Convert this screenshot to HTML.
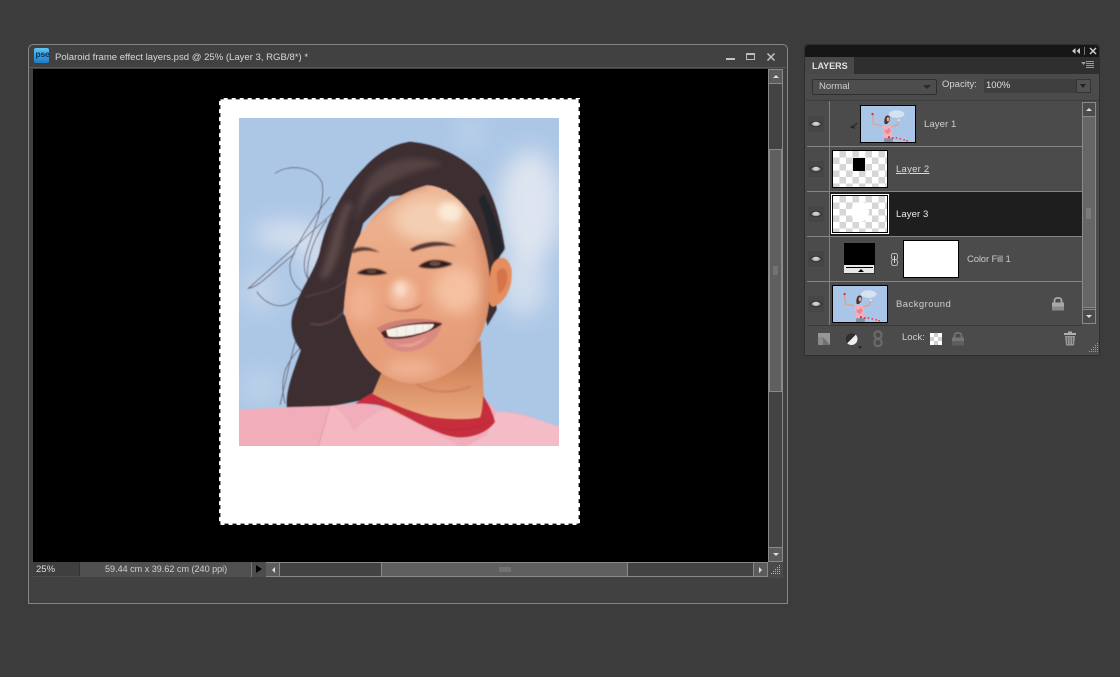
<!DOCTYPE html>
<html><head><meta charset="utf-8">
<style>
html,body{margin:0;padding:0;background:#3c3c3c;width:1120px;height:677px;overflow:hidden}
*{box-sizing:border-box}
body{font-family:"Liberation Sans",sans-serif;font-size:9.5px;color:#d8d8d8;position:relative}
.a{position:absolute}
.t{position:absolute;white-space:nowrap;line-height:12px}
.chk{background-color:#fff;background-image:conic-gradient(#d6d6d6 25%,#fff 0 50%,#d6d6d6 0 75%,#fff 0);background-size:13px 13px}
.th{position:absolute;border:1px solid #000;overflow:hidden}
.div{position:absolute;height:1px;background:#858585}
.eye{position:absolute;left:808px;width:16px;height:16px;background:#464646}
</style></head><body>
<svg width="0" height="0" style="position:absolute"><defs>
<filter id="mb" x="-10%" y="-10%" width="120%" height="120%"><feGaussianBlur stdDeviation=".35"/></filter>
<symbol id="mini" viewBox="0 0 56 38" preserveAspectRatio="none">
<g filter="url(#mb)">
<rect width="56" height="38" fill="#a9c6e8"/>
<ellipse cx="37" cy="8.500" rx="8" ry="4" fill="#d6e2f0"/>
<path d="M12 9L13 19L22 21" fill="none" stroke="#e2a08c" stroke-width="1.400"/>
<path d="M31 22L38 20L39 15" fill="none" stroke="#e2a08c" stroke-width="1.400"/>
<circle cx="12" cy="8.500" r="1.300" fill="#d8383c"/><circle cx="39" cy="15" r="1.100" fill="#f0e4e4"/>
<path d="M24.500 19C23.500 14 25 10 27.500 10C30 10 30.500 12.500 29.500 16L27 19Z" fill="#4a3236"/>
<ellipse cx="28" cy="14" rx="1.400" ry="2.200" fill="#e4a88e"/>
<path d="M22 20L31 20L33 33L24 35Z" fill="#f2b0ba"/>
<path d="M24 24l2 2 3-3 2 3-3 4-3-2z" fill="#e8687a" opacity=".6"/>
<rect x="24" y="34" width="9" height="4" fill="#7f8ea0"/>
<g fill="#e8283c"><rect x="28" y="32" width="2" height="2"/><rect x="32" y="33" width="2" height="1.500"/><rect x="36" y="33" width="1.500" height="1.500"/><rect x="40" y="34" width="1.500" height="1.500"/><rect x="44" y="35" width="1.500" height="1.500"/><rect x="47" y="36" width="1.500" height="1.500"/></g>
</g>
</symbol>
<symbol id="eyeI" viewBox="0 0 16 16">
<path d="M1.500 8C4 3.800 12 3.800 14.500 8C12 12.200 4 12.200 1.500 8Z" fill="#2e2e2e"/>
<path d="M3 8C5 5 11 5 13 8C11 11 5 11 3 8Z" fill="#8e8e8e"/>
<ellipse cx="8" cy="7.600" rx="3" ry="1.900" fill="#cfcfcf"/>
</symbol>
<filter id="b1" x="-100%" y="-100%" width="300%" height="300%"><feGaussianBlur stdDeviation="34"/></filter>
<filter id="b2" x="-100%" y="-100%" width="300%" height="300%"><feGaussianBlur stdDeviation="9"/></filter>
<filter id="b3" x="-100%" y="-100%" width="300%" height="300%"><feGaussianBlur stdDeviation="2.500"/></filter>
<filter id="b4" x="-100%" y="-100%" width="300%" height="300%"><feGaussianBlur stdDeviation="20"/></filter>
<filter id="soft" x="-5%" y="-5%" width="110%" height="110%"><feGaussianBlur stdDeviation="1.400"/></filter>
<clipPath id="pc"><rect x="28" y="25" width="958" height="983"/></clipPath>
<clipPath id="fc"><path d="M366 430C395 335 480 255 590 226C660 228 722 295 748 365C770 425 785 490 778 570C772 635 755 685 722 730C680 790 600 825 535 820C470 812 420 770 388 715C360 665 340 625 343 575C348 525 355 475 366 430Z"/></clipPath>
<linearGradient id="skin" x1="0" y1="0" x2="0" y2="1"><stop offset="0" stop-color="#eeb896"/><stop offset=".5" stop-color="#eaa480"/><stop offset="1" stop-color="#e49a76"/></linearGradient>
<linearGradient id="neckG" x1="0" y1="0" x2="0" y2="1"><stop offset="0" stop-color="#bb6f4a"/><stop offset=".45" stop-color="#d98d62"/><stop offset="1" stop-color="#eeb08a"/></linearGradient>
</defs></svg>

<!-- document window -->
<div class="a" style="left:28px;top:44px;width:760px;height:560px;background:#414141;border:1px solid #858585;border-radius:5px 5px 0 0"></div>
<div class="a" style="left:29px;top:67px;width:757px;height:1px;background:#585858"></div>
<div class="a" style="left:34px;top:48px;width:15px;height:15px;border-radius:2px;background:linear-gradient(#5fc4f4,#1c7cc8)"></div>
<div class="t" style="left:35.500px;top:48px;font-size:8.500px;font-weight:bold;color:#0b2f52;letter-spacing:-.2px">pse</div>
<div class="t" style="left:55px;top:52px;font-size:9.550px;color:#d8d8d8">Polaroid frame effect layers.psd @ 25% (Layer 3, RGB/8*) *</div>
<div class="a" style="left:726px;top:58px;width:9px;height:2px;background:#c4c4c4"></div>
<div class="a" style="left:746px;top:53px;width:9px;height:7px;border:1px solid #bdbdbd;border-top-width:2px"></div>
<svg class="a" style="left:766px;top:52px" width="10" height="10"><path d="M1.500 1.500L8.500 8.500M8.500 1.500L1.500 8.500" stroke="#c4c4c4" stroke-width="1.500"/></svg>

<!-- canvas -->
<div class="a" style="left:33px;top:69px;width:735px;height:493px;background:#000"></div>
<div class="a" style="left:219px;top:98px;width:361px;height:427px;background:#fff"></div>
<svg class="a" style="left:219px;top:98px" width="361" height="427"><rect x=".7" y=".7" width="359.600" height="425.600" fill="none" stroke="#000" stroke-width="1.400" stroke-dasharray="4 4"/></svg>

<!-- photo -->
<svg class="a" style="left:230px;top:110px" width="340" height="340" viewBox="0 0 1020 1020">
<g clip-path="url(#pc)">
<g filter="url(#soft)">
<rect x="20" y="15" width="980" height="1000" fill="#acc7e6"/>
<g filter="url(#b1)" fill="#e3e8f1">
<ellipse cx="900" cy="290" rx="95" ry="170" opacity=".9"/>
<ellipse cx="880" cy="520" rx="70" ry="100" opacity=".7"/>
<ellipse cx="170" cy="375" rx="100" ry="40" opacity=".85"/>
<ellipse cx="90" cy="540" rx="60" ry="70" opacity=".4"/>
<ellipse cx="720" cy="70" rx="30" ry="40" opacity=".45"/>
<ellipse cx="90" cy="830" rx="60" ry="40" opacity=".4"/>
<ellipse cx="260" cy="440" rx="50" ry="90" opacity=".6"/>
</g>
<!-- stray hair -->
<g fill="none" stroke="#43363e" stroke-width="2.400" opacity=".75">
<path d="M330 290C260 350 130 470 55 535C90 530 130 480 195 430"/>
<path d="M135 190C180 160 250 170 275 215C290 270 250 360 225 440C215 500 240 530 280 520"/>
<path d="M80 545C100 575 140 600 180 580C200 565 215 555 240 550"/>
<path d="M300 260C250 320 200 400 180 460C175 520 215 560 270 560"/>
<path d="M225 700C170 750 145 800 165 880"/>
<path d="M290 330C240 400 220 480 240 540"/>
<path d="M215 640C190 700 175 780 150 885"/>
</g>
<!-- hair -->
<path d="M540 95C620 100 700 140 745 190C790 245 810 320 825 415L800 455L800 600L772 648L740 500L650 240L480 260L400 340L350 520L340 610L460 790L440 840L400 870L300 890L170 892C165 840 195 770 212 720C188 690 172 640 195 590C215 530 250 490 268 430C285 340 335 240 400 175C440 130 490 100 540 95Z" fill="#3e2e32"/>
<path d="M430 190C480 145 560 130 640 165C600 170 500 195 430 250C410 270 390 300 375 340C385 270 405 215 430 190Z" fill="#5c4946" opacity=".8" filter="url(#b2)"/>
<path d="M345 280C315 340 295 430 270 500C285 530 320 470 335 400C340 350 355 310 372 280Z" fill="#67534f" opacity=".75" filter="url(#b2)"/>
<path d="M240 640C270 650 310 640 340 605" fill="none" stroke="#7a5c58" stroke-width="5" opacity=".6" filter="url(#b3)"/>
<path d="M225 560C270 550 330 540 355 500" fill="none" stroke="#6a5250" stroke-width="4" opacity=".6" filter="url(#b3)"/>
<path d="M760 250C795 310 810 370 822 420L795 450C780 390 770 320 745 270Z" fill="#22262a" filter="url(#b3)"/>
<!-- neck -->
<path d="M462 770L420 870L560 950L770 950L762 860L752 690L640 790Z" fill="url(#neckG)"/>
<path d="M560 822C600 850 660 852 722 830" fill="none" stroke="#a85c3c" stroke-width="3" opacity=".6" filter="url(#b3)"/>
<!-- ear -->
<path d="M785 470C800 435 835 430 845 480C850 530 825 580 790 590C772 590 770 540 785 470Z" fill="#e58f60"/>
<path d="M800 490C812 465 830 470 832 500C832 530 815 550 805 550Z" fill="#cf6840" opacity=".7" filter="url(#b3)"/>
<!-- face -->
<path d="M366 430C395 335 480 255 590 226C660 228 722 295 748 365C770 425 785 490 778 570C772 635 755 685 722 730C680 790 600 825 535 820C470 812 420 770 388 715C360 665 340 625 343 575C348 525 355 475 366 430Z" fill="url(#skin)"/>
<g clip-path="url(#fc)">
<ellipse cx="600" cy="330" rx="110" ry="65" fill="#f6d4ba" opacity=".85" filter="url(#b4)"/>
<ellipse cx="660" cy="305" rx="36" ry="30" fill="#fdeedd" opacity=".85" filter="url(#b2)"/>
<ellipse cx="680" cy="540" rx="70" ry="70" fill="#f6c4a4" opacity=".9" filter="url(#b4)"/>
<ellipse cx="395" cy="580" rx="40" ry="60" fill="#f2b292" filter="url(#b4)"/>
<ellipse cx="540" cy="775" rx="80" ry="28" fill="#f0b494" filter="url(#b4)"/>
<path d="M715 340C770 420 790 580 730 740L810 720L810 340Z" fill="#c87650" opacity=".65" filter="url(#b4)"/>
<path d="M420 330C480 270 540 240 600 232L560 210L400 300Z" fill="#b97c62" opacity=".55" filter="url(#b2)"/>
</g>
<!-- nose -->
<ellipse cx="518" cy="550" rx="44" ry="46" fill="#f1b89c" filter="url(#b2)"/>
<ellipse cx="512" cy="538" rx="20" ry="24" fill="#fbdac4" filter="url(#b2)"/>
<path d="M465 582C485 605 540 608 578 580C570 600 530 610 505 604C485 600 470 592 465 582Z" fill="#b8684e" opacity=".8" filter="url(#b3)"/>
<!-- brows & eyes -->
<path d="M368 418C395 405 425 412 450 428C425 420 395 418 368 430Z" fill="#5a3a30" filter="url(#b3)"/>
<path d="M540 418C580 392 635 388 680 410C640 402 590 408 548 425Z" fill="#553630" filter="url(#b3)"/>
<path d="M380 490C405 470 445 472 472 490C440 497 410 498 380 490Z" fill="#2e1c1a" filter="url(#b3)"/>
<path d="M565 470C590 445 630 445 668 462C640 475 600 480 565 470Z" fill="#2e1c1a" filter="url(#b3)"/>
<ellipse cx="615" cy="461" rx="17" ry="7" fill="#6a4c42"/>
<ellipse cx="425" cy="484" rx="15" ry="6" fill="#5c4238"/>
<!-- mouth -->
<path d="M445 657C480 635 590 628 636 640C615 690 510 715 462 682Z" fill="#4a211e"/>
<path d="M440 655C490 622 590 618 640 638C590 632 490 642 452 668Z" fill="#cf7f74"/>
<path d="M468 660C510 646 570 640 612 642C610 660 580 668 540 676C510 682 480 682 474 678Z" fill="#f5f0e8"/>
<g stroke="#c8b8aa" stroke-width="1.500" opacity=".6"><path d="M500 652V680M528 648V676M555 644V672M578 642V666M597 640V660"/></g>
<path d="M456 680C490 696 580 682 636 642C625 690 580 725 525 725C490 725 465 705 456 680Z" fill="#d98a82"/>
<path d="M490 700C520 710 560 700 590 680C570 710 520 720 490 700Z" fill="#eeaca2" opacity=".8" filter="url(#b3)"/>
<!-- shirt -->
<path d="M20 900C130 893 230 890 300 888C330 885 360 882 400 880L470 895L600 955L680 985L760 965L775 875C790 895 800 905 800 905C850 905 880 910 910 924L1000 955V1015H20Z" fill="#f1adba"/>
<path d="M300 888C330 895 350 920 372 965C400 930 440 905 470 895C520 920 570 950 640 980L700 1015H265C280 960 290 920 300 888Z" fill="#f5b7c2"/>
<path d="M300 888C288 930 275 970 265 1010" stroke="#dd8898" stroke-width="1.500" fill="none"/>
<path d="M800 905C850 905 900 920 1000 955V1015H700L770 975Z" fill="#f3bcc7"/>
<!-- collar -->
<path d="M375 881C395 868 410 856 426 850C470 875 540 905 600 920C650 928 720 930 750 922C757 905 757 880 760 858C775 880 790 912 795 936C775 965 730 985 680 982C620 975 540 925 480 895C445 883 410 880 375 881Z" fill="#c62e3e"/>
<path d="M600 945C650 965 720 965 780 935" fill="none" stroke="#a82030" stroke-width="3" opacity=".4"/>
</g>
</g>
</svg>

<!-- v scrollbar -->
<div class="a" style="left:768px;top:69px;width:15px;height:493px;background:#434343;border:1px solid #8a8a8a"></div>
<div class="a" style="left:769px;top:70px;width:13px;height:14px;background:#5c5c5c;border-bottom:1px solid #8a8a8a"></div>
<div class="a" style="left:773px;top:75px;width:0;height:0;border:3px solid transparent;border-bottom:3px solid #ddd;border-top:0"></div>
<div class="a" style="left:769px;top:149px;width:13px;height:243px;background:#5f5f5f;border:1px solid #8a8a8a"></div>
<div class="a" style="left:773px;top:266px;width:5px;height:9px;background-image:radial-gradient(#aaa 40%,transparent 45%);background-size:2px 2px"></div>
<div class="a" style="left:769px;top:547px;width:13px;height:14px;background:#5c5c5c;border-top:1px solid #8a8a8a"></div>
<div class="a" style="left:773px;top:553px;width:0;height:0;border:3px solid transparent;border-top:3px solid #ddd;border-bottom:0"></div>

<!-- status bar -->
<div class="a" style="left:33px;top:562px;width:47px;height:15px;background:#3f3f3f;border-right:1px solid #333;border-bottom:1px solid #4c4c4c"></div>
<div class="t" style="left:36px;top:564px;font-size:9.500px;color:#dcdcdc">25%</div>
<div class="a" style="left:80px;top:562px;width:172px;height:15px;background:#505050"></div>
<div class="t" style="left:105px;top:563px;font-size:9.050px;color:#d0d0d0">59.44 cm x 39.62 cm (240 ppi)</div>
<div class="a" style="left:251px;top:562px;width:15px;height:15px;background:#4c4c4c;border-left:1px solid #777"></div>
<div class="a" style="left:256px;top:565px;width:0;height:0;border:4.500px solid transparent;border-left:6px solid #000;border-right:0"></div>
<!-- h scrollbar -->
<div class="a" style="left:266px;top:562px;width:502px;height:15px;background:#434343;border:1px solid #8a8a8a"></div>
<div class="a" style="left:266px;top:563px;width:14px;height:13px;background:#5c5c5c;border-right:1px solid #8a8a8a"></div>
<div class="a" style="left:272px;top:567px;width:0;height:0;border:3px solid transparent;border-right:3px solid #ddd;border-left:0"></div>
<div class="a" style="left:381px;top:562px;width:247px;height:15px;background:#5f5f5f;border:1px solid #8a8a8a"></div>
<div class="a" style="left:499px;top:567px;width:12px;height:5px;background-image:radial-gradient(#aaa 40%,transparent 45%);background-size:2px 2px"></div>
<div class="a" style="left:753px;top:563px;width:14px;height:13px;background:#5c5c5c;border-left:1px solid #8a8a8a"></div>
<div class="a" style="left:759px;top:567px;width:0;height:0;border:3px solid transparent;border-left:3px solid #ddd;border-right:0"></div>
<div class="a" style="left:768px;top:562px;width:15px;height:16px;background:#4a4a4a"></div>
<svg class="a" style="left:770px;top:564px" width="12" height="12"><g fill="#b8b8b8"><rect x="9" y="1" width="1" height="1"/><rect x="7" y="3" width="1" height="1"/><rect x="9" y="3" width="1" height="1"/><rect x="5" y="5" width="1" height="1"/><rect x="7" y="5" width="1" height="1"/><rect x="9" y="5" width="1" height="1"/><rect x="3" y="7" width="1" height="1"/><rect x="5" y="7" width="1" height="1"/><rect x="7" y="7" width="1" height="1"/><rect x="9" y="7" width="1" height="1"/><rect x="1" y="9" width="1" height="1"/><rect x="3" y="9" width="1" height="1"/><rect x="5" y="9" width="1" height="1"/><rect x="7" y="9" width="1" height="1"/><rect x="9" y="9" width="1" height="1"/></g></svg>

<!-- layers panel -->
<div class="a" style="left:804px;top:44px;width:296px;height:312px;background:#4b4b4b;border:1px solid #2e2e2e;border-radius:3px 3px 0 0"></div>
<div class="a" style="left:805px;top:45px;width:294px;height:12px;background:#161616;border-radius:3px 3px 0 0"></div>
<div class="a" style="left:805px;top:57px;width:294px;height:17px;background:#2f2f2f"></div>
<div class="a" style="left:805px;top:57px;width:49px;height:17px;background:#484848"></div>
<div class="t" style="left:812px;top:60px;font-size:9px;font-weight:bold;color:#e0e0e0">LAYERS</div>
<svg class="a" style="left:1072px;top:46px" width="26" height="10"><path d="M3.500 2L0 5L3.500 8ZM8 2L4.500 5L8 8Z" fill="#ccc"/><rect x="12" y="1" width="1" height="8" fill="#777"/><path d="M18 2L24 8M24 2L18 8" stroke="#ccc" stroke-width="1.500"/></svg>
<svg class="a" style="left:1080px;top:60px" width="16" height="10"><path d="M1 2H6L3.500 5Z" fill="#999"/><g fill="#999"><rect x="6" y="1" width="8" height="1"/><rect x="6" y="3" width="8" height="1"/><rect x="6" y="5" width="8" height="1"/><rect x="6" y="7" width="8" height="1"/></g></svg>

<!-- blend controls -->
<div class="a" style="left:812px;top:79px;width:125px;height:16px;background:#4d4d4d;border:1px solid #2f2f2f;border-radius:2px"></div>
<div class="t" style="left:819px;top:81px;font-size:9.500px;color:#cfcfcf">Normal</div>
<div class="a" style="left:923px;top:85px;width:0;height:0;border:4px solid transparent;border-top:4px solid #2a2a2a;border-bottom:0"></div>
<div class="t" style="left:942px;top:79px;font-size:9.500px;color:#d4d4d4">Opacity:</div>
<div class="a" style="left:984px;top:79px;width:107px;height:14px;background:#3f3f3f"></div>
<div class="t" style="left:986px;top:80px;font-size:9.500px;color:#e0e0e0">100%</div>
<div class="a" style="left:1076px;top:79px;width:15px;height:14px;background:#525252;border:1px solid #333"></div>
<div class="a" style="left:1080px;top:84px;width:0;height:0;border:3.500px solid transparent;border-top:4px solid #222;border-bottom:0"></div>
<div class="div" style="left:806px;top:100px;width:293px;background:#3c3c3c"></div>

<!-- rows -->
<div class="a" style="left:829px;top:101px;width:1px;height:224px;background:#808080"></div>
<div class="a" style="left:830px;top:192px;width:252px;height:45px;background:#1e1e1e"></div>
<div class="div" style="left:807px;top:146px;width:275px"></div>
<div class="div" style="left:807px;top:191px;width:275px"></div>
<div class="div" style="left:807px;top:236px;width:275px"></div>
<div class="div" style="left:807px;top:281px;width:275px"></div>
<div class="a" style="left:807px;top:325px;width:275px;height:1px;background:#393939"></div>

<div class="eye" style="top:116px"></div><svg class="a" style="left:808px;top:116px" width="16" height="16"><use href="#eyeI"/></svg>
<div class="eye" style="top:161px"></div><svg class="a" style="left:808px;top:161px" width="16" height="16"><use href="#eyeI"/></svg>
<div class="eye" style="top:206px"></div><svg class="a" style="left:808px;top:206px" width="16" height="16"><use href="#eyeI"/></svg>
<div class="eye" style="top:251px"></div><svg class="a" style="left:808px;top:251px" width="16" height="16"><use href="#eyeI"/></svg>
<div class="eye" style="top:296px"></div><svg class="a" style="left:808px;top:296px" width="16" height="16"><use href="#eyeI"/></svg>

<!-- Layer 1 -->
<svg class="a" style="left:850px;top:120px" width="9" height="10"><path d="M1 7L3 6L4 8ZM4 6L7 3" stroke="#242424" stroke-width="1.200" fill="#181818"/></svg>
<div class="th" style="left:860px;top:105px;width:56px;height:38px"><svg width="54" height="36" style="display:block"><use href="#mini" width="54" height="36"/></svg></div>
<div class="t" style="left:924px;top:119px;color:#cfcfcf;letter-spacing:.1px">Layer 1</div>
<!-- Layer 2 -->
<div class="th chk" style="left:832px;top:150px;width:56px;height:38px"><div class="a" style="left:20px;top:7px;width:12px;height:13px;background:#000"></div></div>
<div class="t" style="left:896px;top:164px;color:#d8d8d8;letter-spacing:.25px;text-decoration:underline">Layer 2</div>
<!-- Layer 3 -->
<div class="a" style="left:831px;top:194px;width:58px;height:40px;background:#000;border:1px solid #fff"></div>
<div class="a chk" style="left:833px;top:196px;width:54px;height:36px"><div class="a" style="left:18px;top:6px;width:18px;height:20px;border-radius:50%;background:#fff"></div></div>
<div class="t" style="left:896px;top:209px;color:#ececec;letter-spacing:.1px">Layer 3</div>
<!-- Color Fill -->
<div class="a" style="left:844px;top:243px;width:31px;height:31px;background:#e8e8e8;border-right:1px solid #333;border-bottom:1px solid #333"></div>
<div class="a" style="left:844px;top:243px;width:31px;height:22px;background:#000"></div>
<div class="a" style="left:846px;top:267px;width:27px;height:1px;background:#000"></div>
<div class="a" style="left:858px;top:269px;width:0;height:0;border:3px solid transparent;border-bottom:3px solid #000;border-top:0"></div>
<svg class="a" style="left:890px;top:252px" width="9" height="15"><path d="M2.500 1.500H6.500L7.500 3V6L6.500 7.500H2.500L1.500 6V3ZM2.500 7.500H6.500L7.500 9V12L6.500 13.500H2.500L1.500 12V9Z" fill="none" stroke="#b4b4b4" stroke-width="1"/><rect x="4" y="4" width="1" height="7" fill="#d8d8d8"/></svg>
<div class="a" style="left:903px;top:240px;width:56px;height:38px;background:#fff;border:1px solid #000"></div>
<div class="t" style="left:967px;top:254px;color:#c8c8c8;letter-spacing:-.15px">Color Fill 1</div>
<!-- Background -->
<div class="th" style="left:832px;top:285px;width:56px;height:38px"><svg width="54" height="36" style="display:block"><use href="#mini" width="54" height="36"/></svg></div>
<div class="t" style="left:896px;top:299px;color:#cfcfcf;letter-spacing:.45px">Background</div>
<svg class="a" style="left:1051px;top:296px" width="14" height="15"><path d="M3.500 7V4.500C3.500 1 10.500 1 10.500 4.500V7" fill="none" stroke="#aaa" stroke-width="1.800"/><rect x="1" y="6.500" width="12" height="8" fill="#a8a8a8"/><rect x="1" y="10.500" width="12" height="4" fill="#8a8a8a"/></svg>

<!-- panel scrollbar -->
<div class="a" style="left:1082px;top:102px;width:14px;height:222px;background:#666;border:1px solid #8a8a8a"></div>
<div class="a" style="left:1083px;top:103px;width:12px;height:14px;background:#4c4c4c;border-bottom:1px solid #8a8a8a"></div>
<div class="a" style="left:1086px;top:108px;width:0;height:0;border:3px solid transparent;border-bottom:3px solid #ddd;border-top:0"></div>
<div class="a" style="left:1083px;top:307px;width:12px;height:2px;background:#4c4c4c;border-top:1px solid #8a8a8a"></div>
<div class="a" style="left:1083px;top:309px;width:12px;height:14px;background:#4c4c4c;border-top:1px solid #8a8a8a"></div>
<div class="a" style="left:1086px;top:315px;width:0;height:0;border:3px solid transparent;border-top:3px solid #ddd;border-bottom:0"></div>
<div class="a" style="left:1086px;top:208px;width:5px;height:11px;background-image:radial-gradient(#b4b4b4 40%,transparent 45%);background-size:2px 2px"></div>

<!-- panel footer -->
<svg class="a" style="left:818px;top:333px" width="13" height="13"><rect width="12" height="12" fill="#8a8a8a"/><path d="M0 0H12V12L5 4H0Z" fill="#969696"/><path d="M5 4L12 12H5Z" fill="#707070"/></svg>
<svg class="a" style="left:844px;top:331px" width="20" height="18"><circle cx="7.500" cy="8" r="6" fill="#f0f0f0"/><path d="M3.300 12.300A6 6 0 0 1 11.700 3.700Z" fill="#2f2f2f"/><path d="M14 15.500H18L16 17.500Z" fill="#111"/></svg>
<svg class="a" style="left:872px;top:330px" width="12" height="18"><rect x="2.500" y="1.500" width="7" height="7" rx="3" fill="none" stroke="#6a6a6a" stroke-width="2.200"/><rect x="2.500" y="9" width="7" height="7" rx="3" fill="none" stroke="#6a6a6a" stroke-width="2.200"/></svg>
<div class="t" style="left:902px;top:332px;font-size:9.500px;color:#c8d0d8">Lock:</div>
<div class="a" style="left:930px;top:333px;width:12px;height:12px;background-color:#fff;background-image:conic-gradient(#d0d0d0 25%,#fff 0 50%,#d0d0d0 0 75%,#fff 0);background-size:8px 8px"></div>
<svg class="a" style="left:951px;top:331px" width="14" height="15"><path d="M3.500 7V4.500C3.500 1 10.500 1 10.500 4.500V7" fill="none" stroke="#747474" stroke-width="1.800"/><rect x="1" y="6.500" width="12" height="8" fill="#747474"/><rect x="1" y="10" width="12" height="4.500" fill="#5e5e5e"/></svg>
<svg class="a" style="left:1063px;top:331px" width="14" height="15"><rect x="5" y="0.500" width="4" height="2" fill="#aaa"/><rect x="1" y="2" width="12" height="2" fill="#b0b0b0"/><path d="M2 5H12L11 14.500H3Z" fill="#969696"/><path d="M4.500 6V13M7 6V13M9.500 6V13" stroke="#666" stroke-width="1"/></svg>
<svg class="a" style="left:1088px;top:342px" width="12" height="12"><g fill="#a0a0a0"><rect x="9" y="1" width="1" height="1"/><rect x="7" y="3" width="1" height="1"/><rect x="9" y="3" width="1" height="1"/><rect x="5" y="5" width="1" height="1"/><rect x="7" y="5" width="1" height="1"/><rect x="9" y="5" width="1" height="1"/><rect x="3" y="7" width="1" height="1"/><rect x="5" y="7" width="1" height="1"/><rect x="7" y="7" width="1" height="1"/><rect x="9" y="7" width="1" height="1"/><rect x="1" y="9" width="1" height="1"/><rect x="3" y="9" width="1" height="1"/><rect x="5" y="9" width="1" height="1"/><rect x="7" y="9" width="1" height="1"/><rect x="9" y="9" width="1" height="1"/></g></svg>
</body></html>
